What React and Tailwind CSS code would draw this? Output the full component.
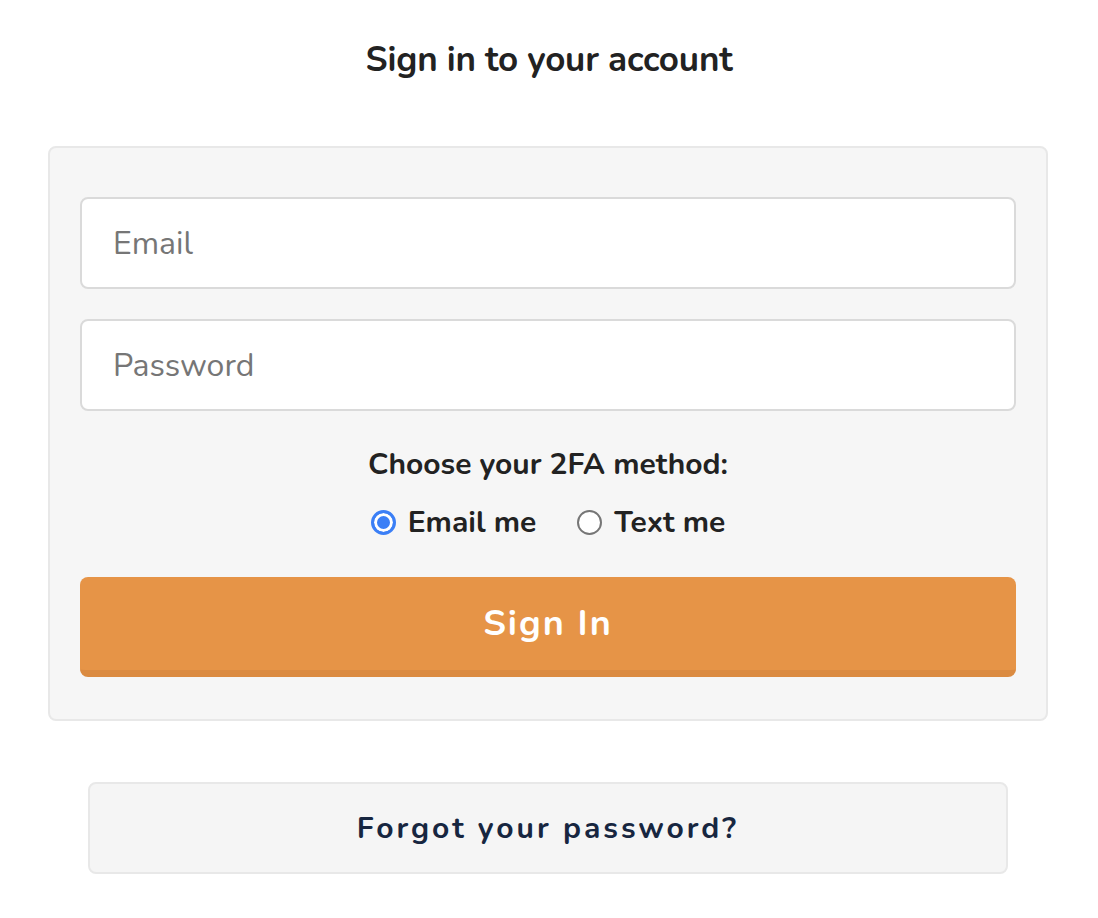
import React, { useState } from "react";

export default function App() {
  const [method, setMethod] = useState("email");
  const radioCls =
    "m-0 h-[25px] w-[25px] shrink-0 appearance-none rounded-full border-2 border-[#767676] bg-white checked:border-[3px] checked:border-[#3b7ff6] checked:bg-[#3b7ff6] checked:shadow-[inset_0_0_0_3px_#ffffff]";
  return (
    <div
      className="w-[1098px] min-h-[918px] bg-white pt-[40px]"
      style={{ fontFamily: '"Nunito", "Lato", "Noto Sans", sans-serif' }}
    >
      <h1 className="text-center text-[35px] leading-[40px] font-bold text-[#222222] tracking-[-0.2px]">
        Sign in to your account
      </h1>

      <div className="ml-[48px] mt-[66px] w-[1000px] rounded-[8px] border-2 border-[#e8e8e8] bg-[#f6f6f6] px-[30px] pt-[49px] pb-[42px]">
        <input
          type="email"
          placeholder="Email"
          className="block h-[92px] w-full rounded-[8px] border-2 border-[#dadada] bg-white px-[31px] text-[32px] text-[#222] placeholder:text-[#767676] outline-none"
        />
        <input
          type="password"
          placeholder="Password"
          className="mt-[30px] block h-[92px] w-full rounded-[8px] border-2 border-[#dadada] bg-white px-[31px] text-[32px] text-[#222] placeholder:text-[#767676] outline-none"
        />

        <p className="mt-[36px] text-center text-[30px] leading-[36px] font-bold text-[#222222]">
          Choose your 2FA method:
        </p>

        <div className="mt-[21px] flex h-[36px] items-center justify-center gap-[41px]">
          <label className="flex items-center gap-[12px] text-[30px] font-bold text-[#222222]">
            <input
              type="radio"
              name="method"
              checked={method === "email"}
              onChange={() => setMethod("email")}
              className={radioCls}
            />
            Email me
          </label>
          <label className="flex items-center gap-[12px] text-[30px] font-bold text-[#222222]">
            <input
              type="radio"
              name="method"
              checked={method === "text"}
              onChange={() => setMethod("text")}
              className={radioCls}
            />
            Text me
          </label>
        </div>

        <button className="mt-[37px] block h-[100px] w-full rounded-[8px] border-b-[7px] border-[#db8b41] bg-[#e69447] text-[36px] font-bold tracking-[2px] text-white">
          Sign In
        </button>
      </div>

      <button className="ml-[88px] mt-[61px] block h-[92px] w-[920px] rounded-[8px] border-2 border-[#e8e8e8] bg-[#f5f5f5] text-[30px] font-bold tracking-[3px] text-[#172640]">
        Forgot your password?
      </button>
    </div>
  );
}
